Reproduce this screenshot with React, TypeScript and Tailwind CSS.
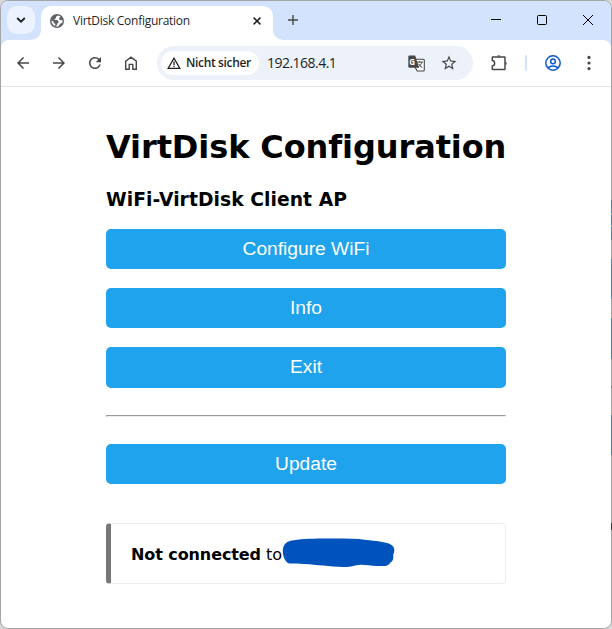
import type { ReactNode } from "react";

const UI = "font-['Open_Sans','Noto_Sans',sans-serif]";

function Icon({ d, className }: { d: string; className: string }) {
  return (
    <svg viewBox="0 0 24 24" className={"shrink-0 " + className} fill="currentColor">
      <path d={d} />
    </svg>
  );
}

function TabStrip() {
  return (
    <div className="flex h-[39px] shrink-0 bg-[#d3e3fd]">
      <div className="mt-[5px] ml-[6px] flex size-7 shrink-0 items-center justify-center rounded-[10px] bg-[#ecf3fe]">
        <svg viewBox="0 0 10 6" className="h-[6px] w-[10px]" fill="none" stroke="#1f1f1f" strokeWidth="1.8">
          <path d="M1.2 1 5 4.7 8.8 1" />
        </svg>
      </div>
      <div className="relative mt-[5px] ml-[6px] flex h-[34px] w-[232px] shrink-0 items-center rounded-t-[10px] bg-white pb-1 pl-[9px]">
        <svg viewBox="0 0 10 10" className="absolute bottom-0 -left-[10px] size-[10px]" fill="#fff">
          <path d="M10 0A10 10 0 0 1 0 10H10Z" />
        </svg>
        <svg viewBox="0 0 10 10" className="absolute -right-[10px] bottom-0 size-[10px]" fill="#fff">
          <path d="M0 0A10 10 0 0 0 10 10H0Z" />
        </svg>
        <svg viewBox="0 0 14 14" className="mt-[-1px] size-[14px] shrink-0">
          <circle cx="7" cy="7" r="7" fill="#5f6368" />
          <path fill="#fff" d="M8.2 1.5 6.2 2.6 6 4.2 4.6 5 4.8 6.1 7.2 6.1 8.6 7.2 8.4 8.8 7.2 9.6 7 11.2 5.4 12.3A5.6 5.6 0 0 0 8.2 12.4L10.2 9.8 12.5 8.4 12.5 6 10.5 6.3 9.1 5.2 9.2 3.8 10.7 2.9A5.6 5.6 0 0 0 8.2 1.5ZM1.6 6.6A5.5 5.5 0 0 0 5 12L5.4 10 3.6 8.8 3.4 7.2Z" />
        </svg>
        <span className="ml-[9px] w-[180px] text-[12px] leading-4 tracking-[-0.27px] whitespace-nowrap text-[#1f1f1f]">VirtDisk Configuration</span>
        <svg viewBox="0 0 8 8" className="mt-[-1px] size-2 shrink-0" fill="none" stroke="#1f1f1f" strokeWidth="1.5">
          <path d="m.6.6 6.8 6.8M7.4.6.6 7.4" />
        </svg>
      </div>
      <svg viewBox="0 0 10 10" className="mt-[14px] ml-[15px] size-[10px] shrink-0" fill="none" stroke="#474747" strokeWidth="1.4">
        <path d="M5 0v10M0 5h10" />
      </svg>
      <div className="mt-[14px] ml-auto flex gap-9 pr-[18px]">
        <svg viewBox="0 0 10 10" className="size-[10px]" stroke="#000">
          <path d="M0 4.5h10" />
        </svg>
        <svg viewBox="0 0 10 10" className="size-[10px]" fill="none" stroke="#000">
          <rect x=".5" y=".5" width="9" height="9" rx="1" />
        </svg>
        <svg viewBox="0 0 10 10" className="size-[10px]" fill="none" stroke="#000">
          <path d="m0 0 10 10M10 0 0 10" />
        </svg>
      </div>
    </div>
  );
}

function Toolbar() {
  return (
    <div className="flex h-[46px] shrink-0 bg-[#d3e3fd]">
      <div className="flex w-full items-center rounded-t-[8px] bg-white pl-[13px] text-[#474747]">
        <Icon className="size-[18px]" d="M20 11H7.83l5.59-5.59L12 4l-8 8 8 8 1.41-1.41L7.83 13H20v-2z" />
        <Icon className="ml-[18px] size-[18px]" d="M12 4l-1.41 1.41L16.17 11H4v2h12.17l-5.58 5.59L12 20l8-8z" />
        <Icon className="ml-[18px] size-[18px]" d="M17.65 6.35A7.958 7.958 0 0012 4c-4.42 0-7.99 3.58-7.99 8s3.57 8 7.99 8c3.73 0 6.84-2.55 7.73-6h-2.08A5.99 5.99 0 0112 18c-3.31 0-6-2.69-6-6s2.69-6 6-6c1.66 0 3.14.69 4.22 1.78L13 11h7V4l-2.35 2.35z" />
        <svg viewBox="0 0 12 14" className="ml-[21px] h-[14px] w-3 shrink-0" fill="none" stroke="currentColor" strokeWidth="1.4">
          <path d="M.7 5.2 6 1.2l5.3 4v8.1H7.8V8.4H4.2v4.9H.7Z" />
        </svg>
        <div className="ml-[20px] flex h-[34px] w-[316px] shrink-0 items-center rounded-full bg-[#ecf1fa] pl-1">
          <div className="flex h-6 w-[98px] items-center rounded-full bg-white pl-[6px] text-[#1f1f1f]">
            <svg viewBox="0 0 14 12" className="h-3 w-[14px] shrink-0" fill="none" stroke="currentColor" strokeWidth="1.3">
              <path d="M1.2 11.3 7 1.2l5.8 10.1ZM7 4.6v3.3M7 8.7V10" />
            </svg>
            <span className="ml-[5px] text-[12px] leading-4 font-semibold tracking-[-0.35px] whitespace-nowrap">Nicht sicher</span>
          </div>
          <span className="ml-2 w-[141px] text-[14px] leading-5 tracking-[-0.52px] text-[#1f1f1f]">192.168.4.1</span>
          <svg viewBox="0 0 17 17" className="size-[17px] shrink-0">
            <path d="M7 4.2h8.3q1 0 1 1V15q0 1-1 1H9.2L7 12Z" fill="#fff" stroke="#474747" strokeWidth="1.1" />
            <path d="M1.5.5h5.7L11 12.7H1.5q-1.2 0-1.2-1.2V1.7Q.3.5 1.5.5Z" fill="#474747" />
            <text x="1.3" y="9.6" fontSize="8" fontWeight="bold" fill="#fff" className={UI}>G</text>
            <path d="M9 7.1h6M11.8 5.9v1.2M13.8 7.1c-.6 2.3-2 4-3.8 5M10.4 8.7c.9 1.7 2.3 3 4 3.9" fill="none" stroke="#474747" strokeWidth="1" />
          </svg>
          <Icon className="ml-[15px] size-[18px]" d="M22 9.24l-7.19-.62L12 2 9.19 8.63 2 9.24l5.46 4.73L5.82 21 12 17.27 18.18 21l-1.63-7.03L22 9.24zM12 15.4l-3.76 2.27 1-4.28-3.32-2.88 4.38-.38L12 6.1l1.71 4.04 4.38.38-3.32 2.88 1 4.28L12 15.4z" />
        </div>
        <svg viewBox="0 0 17 17" className="mt-[-2px] ml-[18px] size-[17px] shrink-0" fill="none" stroke="currentColor" strokeWidth="1.5">
          <path d="M1.6 2.9h12.1q.3 0 .3.3v12.1q0 .3-.3.3H1.6q-.3 0-.3-.3v-3.4c3.1-.3 3.1-5 0-5.3V3.2q0-.3.3-.3Z" />
          <path d="M6 2.5a1.9 1.9 0 0 1 3.6 0ZM14.4 7.4a1.9 1.9 0 0 1 0 3.6Z" fill="currentColor" stroke="none" />
        </svg>
        <div className="ml-[17px] h-4 w-[2px] rounded-full bg-[#d3e3fd]" />
        <svg viewBox="0 0 16 16" className="ml-[18px] size-4 shrink-0" fill="none" stroke="#0b57d0" strokeWidth="1.5">
          <circle cx="8" cy="8" r="7.2" />
          <circle cx="8" cy="6.4" r="2.3" />
          <path d="M3 12.9c2.5-2.5 7.5-2.5 10 0" />
        </svg>
        <svg viewBox="0 0 4 16" className="ml-[26px] h-4 w-1 shrink-0" fill="currentColor">
          <circle cx="2" cy="2.4" r="1.6" />
          <circle cx="2" cy="8" r="1.6" />
          <circle cx="2" cy="13.6" r="1.6" />
        </svg>
      </div>
    </div>
  );
}

function MenuButton({ children, className }: { children: ReactNode; className: string }) {
  return (
    <button
      className={
        "block w-full rounded-[5px] bg-[#1fa3ec] text-center font-['Liberation_Sans',Arial,sans-serif] text-[19.2px] leading-[38.4px] text-white " +
        className
      }
    >
      {children}
    </button>
  );
}

function Page() {
  return (
    <main className="mx-auto w-[400px] grow font-['DejaVu_Sans',Verdana,sans-serif] text-black">
      <h1 className="mt-[40px] h-10 text-[32px] leading-10 font-bold tracking-[-0.1px] whitespace-nowrap">VirtDisk Configuration</h1>
      <h3 className="mt-[21px] h-6 text-[18.72px] leading-6 font-bold tracking-[0.06px] whitespace-nowrap">WiFi-VirtDisk Client AP</h3>
      <MenuButton className="mt-[17px] h-10">Configure WiFi</MenuButton>
      <MenuButton className="mt-[19px] h-10">Info</MenuButton>
      <MenuButton className="mt-[19px] h-[41px]">Exit</MenuButton>
      <hr className="mt-[27px] h-[2px] border border-[#eee] border-t-[#9a9a9a] border-l-[#9a9a9a]" />
      <MenuButton className="mt-[27px] h-10">Update</MenuButton>
      <div className="mt-[39px] flex h-[61px] items-center rounded-[4px] border border-l-[5px] border-[#eee] border-l-[#777] pt-[2px] pl-5 text-[16px] leading-5">
        <p className="tracking-[-0.09px] whitespace-nowrap"><b>Not connected</b> to</p>
        <svg viewBox="0 0 114 32" className="-mt-px h-8 w-[114px] shrink-0" fill="#0052bd">
          <path d="M.8 13C.8 5.8 5 2.8 12 2.2 27-.1 55 .7 77 .9c10 1.8 18 1.2 28 4.1 5 1.4 7.5 4 7.3 7.5-.1 2-.9 3-1.1 5 .5 4-.5 5.8-3 7.3-2.8 3.8-5 3.4-13 3.1-8 .1-15-2.1-22-.4-9 3-21 1.1-32 .1-12-1.6-26-2-34-2.2C3.8 24.9.8 19 .8 13Z" />
        </svg>
      </div>
    </main>
  );
}

export default function App() {
  return (
    <div className={"flex h-[629px] w-[612px] overflow-hidden bg-[#d8d8d8] " + UI}>
      <div className="relative flex w-full flex-col overflow-hidden rounded-[8px] border border-[#a5a5a5] bg-white">
        <TabStrip />
        <Toolbar />
        <div className="h-px shrink-0 bg-[#e0e2e6]" />
        <Page />
      </div>
      <div className="absolute top-[200px] left-[611px] w-px">
        <div className="h-[13px] bg-[#4484a8]" />
        <div className="mt-[2px] h-[10px] bg-[#4484a8]" />
        <div className="mt-[2px] h-[13px] bg-[#4484a8]" />
        <div className="mt-[19px] h-10 bg-[#4484a8]" />
        <div className="mt-[19px] h-[41px] bg-[#4484a8]" />
        <div className="mt-[27px] h-[2px] bg-[#666]" />
        <div className="mt-[27px] h-10 bg-[#4484a8]" />
        <div className="mt-[68px] h-[7px] bg-[#333]" />
      </div>
    </div>
  );
}
